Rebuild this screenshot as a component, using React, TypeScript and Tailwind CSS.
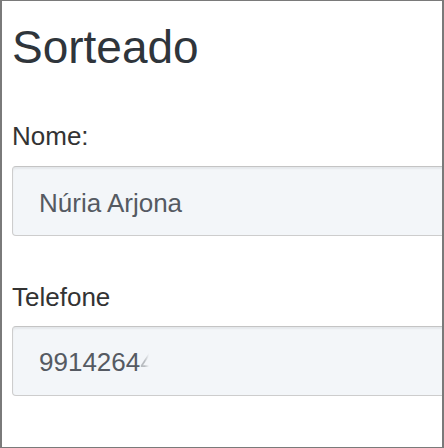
export default function App() {
    return (
        <main className="w-[444px] h-[448px] overflow-hidden bg-white" style={{ fontFamily: '"Liberation Sans", Arial, sans-serif' }}>
            <div className="h-[448px] border-y border-x-2 border-[#7a7a7a] pl-[10px] pt-[18px] overflow-hidden">
                <h1 className="text-[46px] leading-[56px] font-normal text-[#2f353b]">Sorteado</h1>

                <form className="mt-[46px] flex flex-col">
                    <label className="text-[26px] leading-[30px] text-[#333]" htmlFor="nome">Nome:</label>
                    <div
                        id="nome"
                        className="mt-[15px] w-[460px] h-[70px] rounded-[4px] border border-[#cdcdcd] border-t-[#c4c4c4] bg-[#f3f6f9] shadow-[inset_0_2px_2px_rgba(0,0,0,0.06)] pl-[26px] pt-[21px] text-[26px] leading-[30px] text-[#555a62]"
                    >
                        Núria Arjona
                    </div>

                    <label className="mt-[46px] text-[26px] leading-[30px] text-[#333]" htmlFor="telefone">Telefone</label>
                    <div
                        id="telefone"
                        className="mt-[14px] w-[460px] h-[70px] rounded-[4px] border border-[#cdcdcd] border-t-[#c4c4c4] bg-[#f3f6f9] shadow-[inset_0_2px_2px_rgba(0,0,0,0.06)] pl-[26px] pt-[20px] text-[26px] leading-[30px] text-[#555a62]"
                    >
                        9914264<span className="bg-linear-to-r from-[#b8bcc0] from-30% to-transparent to-60% bg-clip-text text-transparent">4</span>
                    </div>
                </form>
            </div>
        </main>
    );
}
